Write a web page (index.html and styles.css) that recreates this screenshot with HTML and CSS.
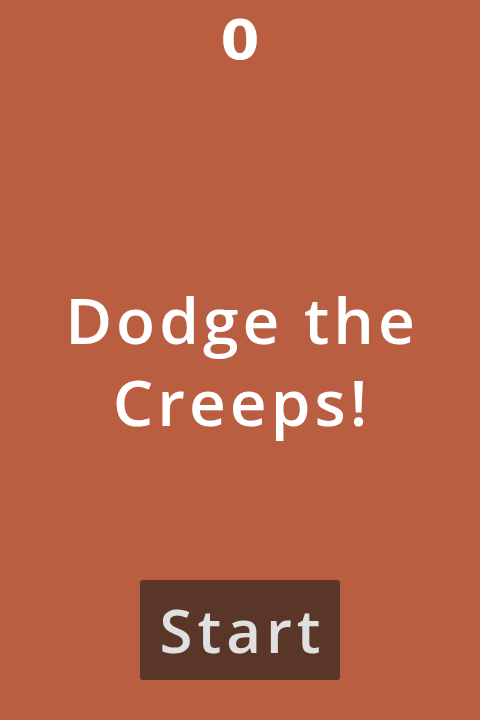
FILE: index.html
```html
<!DOCTYPE html>
<html>
<head>
<meta charset="utf-8">
<link rel="stylesheet" href="styles.css">
</head>
<body>
<div class="screen">
  <div class="score">0</div>
  <div class="message">Dodge the<br>Creeps!</div>
  <button class="start">Start</button>
</div>
</body>
</html>
```
FILE: styles.css
```css
html, body {
  margin: 0;
  padding: 0;
  background: #b95e41;
}
.screen {
  width: 480px;
  height: 720px;
  display: flex;
  flex-direction: column;
  align-items: center;
  font-family: "Open Sans", "DejaVu Sans", sans-serif;
  font-weight: 600;
  color: #ffffff;
}
.score {
  margin-top: 7px;
  font-family: "DejaVu Sans", sans-serif;
  font-weight: bold;
  font-size: 56px;
  line-height: 66px;
  height: 66px;
}
.message {
  margin-top: 206px;
  padding-left: 4px;
  font-size: 64px;
  line-height: 82px;
  text-align: center;
  letter-spacing: 4px;
}
.start {
  margin-top: 137px;
  width: 200px;
  height: 100px;
  border: none;
  border-radius: 3px;
  background: #5a3629;
  color: #e0e0e0;
  font-family: "Open Sans", "DejaVu Sans", sans-serif;
  font-weight: 600;
  font-size: 60px;
  letter-spacing: 5px;
  padding: 0 0 0 5px;
}
```
